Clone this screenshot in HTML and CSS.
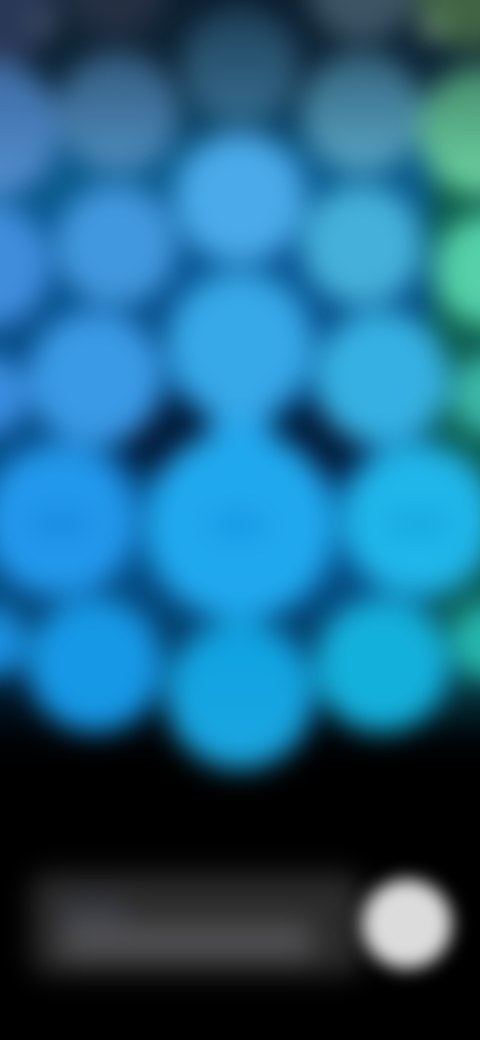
FILE: index.html
```html
<!DOCTYPE html>
<html lang="en">
<head>
<meta charset="utf-8">
<title>Blurred screen</title>
<link rel="stylesheet" href="styles.css">
</head>
<body>
<main class="screen">
  <svg class="bubbles" viewBox="0 0 480 1040" width="480" height="1040" aria-hidden="true">
    <defs>
      <linearGradient id="gap" x1="0" y1="0" x2="0" y2="1">
        <stop offset="0" stop-color="#0a1a2a"/>
        <stop offset="0.12" stop-color="#0b2436"/>
        <stop offset="0.2" stop-color="#0a5a8a"/>
        <stop offset="0.3" stop-color="#06528e"/>
        <stop offset="0.42" stop-color="#03447c"/>
        <stop offset="0.6" stop-color="#04508c"/>
        <stop offset="0.7" stop-color="#023458"/>
        <stop offset="0.75" stop-color="#000e1a"/>
        <stop offset="0.79" stop-color="#000"/>
      </linearGradient>
      <linearGradient id="greenEdge" x1="0" y1="0" x2="0" y2="1">
        <stop offset="0" stop-color="#0a5a45" stop-opacity="0"/>
        <stop offset="0.1" stop-color="#0a5a45"/>
        <stop offset="0.8" stop-color="#0a5a55"/>
        <stop offset="1" stop-color="#0a5a55" stop-opacity="0"/>
      </linearGradient>
      <linearGradient id="midTop" x1="0" y1="0" x2="0" y2="1">
        <stop offset="0" stop-color="#1e3f58"/>
        <stop offset="1" stop-color="#386f90"/>
      </linearGradient>
      <linearGradient id="blueLeft" x1="0" y1="0" x2="0" y2="1">
        <stop offset="0" stop-color="#345a7e"/>
        <stop offset="1" stop-color="#4f8fc0"/>
      </linearGradient>
      <linearGradient id="blueRight" x1="0" y1="0" x2="0" y2="1">
        <stop offset="0" stop-color="#34627c"/>
        <stop offset="1" stop-color="#5aa8c8"/>
      </linearGradient>
      <linearGradient id="edgeLeft" x1="0" y1="0" x2="0" y2="1">
        <stop offset="0" stop-color="#3c6aa0"/>
        <stop offset="1" stop-color="#5490d2"/>
      </linearGradient>
      <linearGradient id="edgeRight" x1="0" y1="0" x2="0" y2="1">
        <stop offset="0" stop-color="#448a6c"/>
        <stop offset="1" stop-color="#70d8a6"/>
      </linearGradient>
      <linearGradient id="bottomMid" x1="0" y1="0" x2="0" y2="1">
        <stop offset="0" stop-color="#0ea2e2"/>
        <stop offset="1" stop-color="#1ca6e0"/>
      </linearGradient>
      <filter id="soft" filterUnits="userSpaceOnUse" x="-100" y="-100" width="680" height="1240" color-interpolation-filters="sRGB">
        <feGaussianBlur stdDeviation="14"/>
      </filter>
    </defs>
    <g filter="url(#soft)">
      <rect x="-40" y="-40" width="560" height="1000" fill="url(#gap)"/>
      <rect x="430" y="100" width="90" height="640" fill="url(#greenEdge)"/>
      <ellipse cx="165" cy="438" rx="46" ry="38" fill="#011a38"/>
      <ellipse cx="318" cy="442" rx="46" ry="38" fill="#011a38"/>
      <circle cx="-5" cy="5" r="62" fill="#2a3858"/>
      <circle cx="115" cy="-12" r="52" fill="#242f42"/>
      <circle cx="362" cy="-12" r="54" fill="#3c5464"/>
      <circle cx="472" cy="-6" r="56" fill="#406444"/>
      <circle cx="45" cy="24" r="10" fill="#5a666e"/>
      <circle cx="432" cy="28" r="12" fill="#7a9a80"/>
      <circle cx="240" cy="65" r="58" fill="url(#midTop)"/>
      <circle cx="118" cy="112" r="60" fill="url(#blueLeft)"/>
      <circle cx="362" cy="112" r="60" fill="url(#blueRight)"/>
      <circle cx="-8" cy="128" r="68" fill="url(#edgeLeft)"/>
      <circle cx="482" cy="130" r="64" fill="url(#edgeRight)"/>
      <circle cx="240" cy="198" r="65" fill="#4aaaea"/>
      <circle cx="116" cy="245" r="60" fill="#4298de"/>
      <circle cx="362" cy="245" r="60" fill="#45b0da"/>
      <circle cx="-12" cy="265" r="62" fill="#408ddc"/>
      <circle cx="490" cy="270" r="56" fill="#55d0a8"/>
      <ellipse cx="240" cy="420" rx="30" ry="60" fill="#2aa4e8"/>
      <circle cx="240" cy="345" r="73" fill="#37a8e8"/>
      <circle cx="95" cy="378" r="67" fill="#3a9ae6"/>
      <circle cx="382" cy="378" r="67" fill="#36b0e2"/>
      <circle cx="-12" cy="395" r="40" fill="#3a8ee0"/>
      <circle cx="492" cy="395" r="40" fill="#3cb8a8"/>
      <circle cx="240" cy="525" r="95" fill="#20a8ee"/>
      <circle cx="60" cy="520" r="76" fill="#2298ec"/>
      <circle cx="418" cy="520" r="76" fill="#20b6ea"/>
      <circle cx="95" cy="665" r="67" fill="#1698e6"/>
      <circle cx="382" cy="665" r="67" fill="#14b0dc"/>
      <circle cx="240" cy="695" r="74" fill="url(#bottomMid)"/>
      <circle cx="-8" cy="642" r="35" fill="#1a90e0"/>
      <circle cx="490" cy="642" r="38" fill="#26b8ae"/>
      <ellipse cx="60" cy="524" rx="34" ry="8" fill="#1484d8"/>
      <ellipse cx="238" cy="525" rx="30" ry="8" fill="#1090dc"/>
      <ellipse cx="418" cy="524" rx="34" ry="8" fill="#10a0da"/>
    </g>
  </svg>
  <section class="dock">
    <div class="field">
      <div class="field-label"></div>
      <div class="field-value"></div>
    </div>
    <div class="action"></div>
  </section>
</main>
</body>
</html>
```
FILE: styles.css
```css
html, body {
  margin: 0;
  padding: 0;
  background: #000;
}

.screen {
  position: relative;
  width: 480px;
  height: 1040px;
  overflow: hidden;
  background: #000;
  display: flex;
  flex-direction: column;
  justify-content: flex-end;
  box-sizing: border-box;
  padding: 0 28px 64px 32px;
}

.bubbles {
  position: absolute;
  left: 0;
  top: 0;
}

.dock {
  position: relative;
  display: flex;
  align-items: center;
  gap: 0;
  height: 104px;
}

.field {
  flex: 1;
  height: 100px;
  box-sizing: border-box;
  padding: 30px 50px 14px 30px;
  background: #2b2b2b;
  border-radius: 16px;
  filter: blur(14px);
}

.field-label {
  width: 62px;
  height: 18px;
  background: #3c404b;
}

.field-value {
  height: 38px;
  background: #505052;
}

.action {
  flex: none;
  width: 90px;
  height: 90px;
  border-radius: 50%;
  background: #dcdcdc;
  filter: blur(9px);
}
```
